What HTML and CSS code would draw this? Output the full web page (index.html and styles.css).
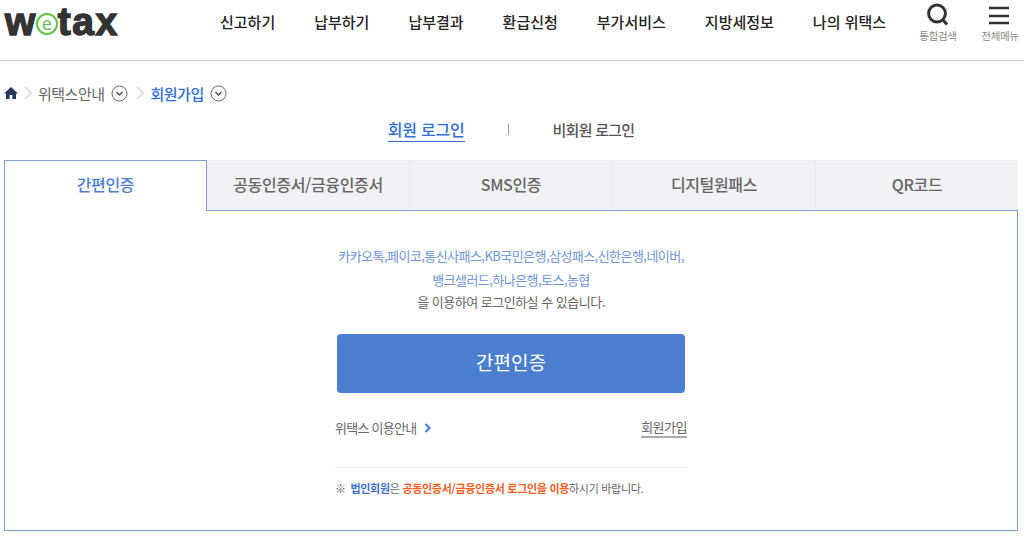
FILE: index.html
```html
<!DOCTYPE html>
<html lang="ko">
<head>
<meta charset="utf-8">
<title>위택스 회원 로그인</title>
<link rel="stylesheet" href="styles.css">
</head>
<body>
<header class="header">
  <a class="logo"><span>w</span><span class="logo-e">e</span><span>tax</span></a>
  <nav class="gnb">
    <a>신고하기</a><a>납부하기</a><a>납부결과</a><a>환급신청</a><a>부가서비스</a><a>지방세정보</a><a>나의 위택스</a>
  </nav>
  <div class="tools">
    <a class="tool">
      <svg width="24" height="24" viewBox="0 0 24 24"><circle cx="11" cy="10.5" r="8.4" fill="none" stroke="#333" stroke-width="3"/><path d="M16.5 16.5L21 21.5" stroke="#333" stroke-width="3"/></svg>
      <span>통합검색</span>
    </a>
    <a class="tool">
      <svg width="24" height="24" viewBox="0 0 24 24"><path d="M1 5h20M1 13h20M1 20h20" stroke="#333" stroke-width="2.6"/></svg>
      <span>전체메뉴</span>
    </a>
  </div>
</header>
<div class="crumbs">
  <svg class="home" width="14" height="12" viewBox="0 0 14 12"><path d="M7 0L0 6.5h2V12h3.6V8h2.8v4H12V6.5h2z" fill="#23395b"/></svg>
  <svg class="sep" width="9" height="14" viewBox="0 0 9 14"><path d="M1 1l6.5 6L1 13" fill="none" stroke="#bbb"/></svg>
  <span>위택스안내</span>
  <svg class="drop" width="17" height="17" viewBox="0 0 17 17"><circle cx="8.5" cy="8.5" r="7.5" fill="none" stroke="#666"/><path d="M5.5 7l3 3 3-3" fill="none" stroke="#555" stroke-width="1.5"/></svg>
  <svg class="sep" width="9" height="14" viewBox="0 0 9 14"><path d="M1 1l6.5 6L1 13" fill="none" stroke="#bbb"/></svg>
  <span class="crumb-on">회원가입</span>
  <svg class="drop" width="17" height="17" viewBox="0 0 17 17"><circle cx="8.5" cy="8.5" r="7.5" fill="none" stroke="#666"/><path d="M5.5 7l3 3 3-3" fill="none" stroke="#555" stroke-width="1.5"/></svg>
</div>
<div class="login-type">
  <a class="type-on">회원 로그인</a>
  <i class="type-bar"></i>
  <a class="type-off">비회원 로그인</a>
</div>
<main class="panel-wrap">
  <div class="tabs">
    <a class="tab tab-on">간편인증</a>
    <a class="tab">공동인증서/금융인증서</a>
    <a class="tab">SMS인증</a>
    <a class="tab">디지털원패스</a>
    <a class="tab">QR코드</a>
  </div>
  <section class="panel">
    <div class="inner">
      <p class="providers">카카오톡,페이코,통신사패스,KB국민은행,삼성패스,신한은행,네이버,<br>뱅크샐러드,하나은행,토스,농협</p>
      <p class="lead">을 이용하여 로그인하실 수 있습니다.</p>
      <button class="btn" type="button">간편인증</button>
      <div class="links">
        <a class="guide">위택스 이용안내<svg width="8" height="10" viewBox="0 0 8 10"><path d="M1.5 1l4 4-4 4" fill="none" stroke="#4c7ecf" stroke-width="2.2"/></svg></a>
        <a class="join">회원가입</a>
      </div>
      <p class="note">※ <b class="blue">법인회원</b>은 <b class="orange">공동인증서/금융인증서 로그인을 이용</b>하시기 바랍니다.</p>
    </div>
  </section>
</main>
</body>
</html>
```
FILE: styles.css
```css
* { box-sizing: border-box; }
html, body { margin: 0; padding: 0; }
body {
  width: 1024px;
  height: 536px;
  overflow: hidden;
  background: #fff;
  font-family: "Noto Sans CJK KR", "Noto Sans", sans-serif;
  color: #333;
}
p { margin: 0; }
.header {
  height: 61px;
  border-bottom: 1px solid #c4c8d6;
  display: flex;
  align-items: flex-start;
}
.logo {
  width: 220px;
  padding-left: 5px;
  font-family: "Liberation Sans", sans-serif;
  font-weight: 700;
  font-size: 39px;
  color: #333;
  letter-spacing: 1.5px;
  -webkit-text-stroke: 1.4px #333;
  display: flex;
  align-items: flex-start;
}
.logo-e {
  width: 22px;
  height: 22px;
  margin: 13px 0 0 -1px;
  border: 2px solid #62c04d;
  border-radius: 50%;
  color: #62c04d;
  font-family: "Open Sans", sans-serif;
  font-size: 18px;
  font-weight: 500;
  line-height: 16px;
  text-align: center;
  letter-spacing: 0;
  -webkit-text-stroke: 0;
}
.gnb {
  display: flex;
  gap: 39px;
  width: 666px;
  padding-top: 10px;
  font-size: 15px;
  line-height: 24px;
  font-weight: 500;
  color: #222;
}
.gnb a { white-space: nowrap; }
.tools { display: flex; padding-left: 32px; gap: 22px; padding-top: 3px; }
.tool {
  display: flex;
  flex-direction: column;
  align-items: center;
  width: 40px;
  font-size: 10.5px;
  line-height: 18px;
  color: #888;
  letter-spacing: -0.3px;
  white-space: nowrap;
}
.crumbs {
  display: flex;
  align-items: center;
  height: 20px;
  margin-top: 22px;
  padding-left: 4px;
  font-size: 15px;
  color: #666;
  letter-spacing: -0.5px;
}
.home { margin-right: 6px; }
.sep { margin-right: 5px; }
.drop { margin: 0 8px 0 6px; }
.crumb-on { color: #2f6fd8; font-weight: 500; margin-left: 1px; }
.login-type {
  display: flex;
  justify-content: center;
  align-items: center;
  height: 30px;
  margin-top: 11px;
  padding-right: 2px;
  font-weight: 500;
  color: #555;
}
.type-on { color: #2f6fd8; border-bottom: 1px solid #2f6fd8; line-height: 24px; font-size: 16px; letter-spacing: -0.2px; }
.type-off { font-size: 15px; letter-spacing: -0.75px; }
.type-bar { width: 1px; height: 11px; background: #999; margin: 0 44px 0 43px; }
.panel-wrap { margin: 16px 6px 0 4px; }
.tabs { display: flex; height: 51px; }
.tab {
  flex: 1;
  display: flex;
  align-items: center;
  justify-content: center;
  padding-bottom: 3px;
  background: #f1f2f6;
  border-right: 1px solid #e8e9ee;
  border-top: 1px solid #ecedf1;
  border-bottom: 1px solid #7f9fdc;
  font-size: 16px;
  font-weight: 500;
  color: #666;
  letter-spacing: -0.35px;
}
.tab:last-child { border-right: 0; }
.tab-on {
  flex: none;
  width: 203px;
  padding-bottom: 4px;
  background: #fff;
  color: #4c7ecf;
  border: 1px solid #7f9fdc;
  border-bottom: 0;
}
.panel {
  height: 320px;
  border: 1px solid #7f9fdc;
  border-top: 0;
  display: flex;
  justify-content: center;
}
.inner { width: 352px; padding-top: 33px; }
.providers {
  font-size: 13px;
  line-height: 24px;
  color: #6f95d9;
  text-align: center;
  letter-spacing: -0.55px;
  white-space: nowrap;
}
.lead {
  font-size: 13px;
  line-height: 20px;
  color: #666;
  text-align: center;
  letter-spacing: -0.5px;
}
.btn {
  display: block;
  width: 348px;
  height: 59px;
  margin: 22px 0 0 2px;
  padding: 0 0 4px;
  border: 0;
  border-radius: 4px;
  background: #4c7ecf;
  color: #fff;
  font: 400 19px "Noto Sans CJK KR", sans-serif;
}
.links {
  display: flex;
  justify-content: space-between;
  align-items: center;
  margin-top: 22px;
  height: 24px;
  font-size: 13px;
  color: #666;
  letter-spacing: -0.5px;
}
.guide { letter-spacing: -0.75px; }
.guide svg { margin-left: 8px; }
.join { border-bottom: 2px solid #aaa; line-height: 19px; }
.note {
  margin-top: 28px;
  padding-top: 11px;
  border-top: 1px solid #f0f0f0;
  font-size: 11px;
  line-height: 18px;
  color: #666;
  letter-spacing: -0.3px;
  white-space: nowrap;
}
.note b { font-weight: 700; }
.blue { color: #3f6fc9; margin-left: 2px; }
.orange { color: #f0601e; }
```
